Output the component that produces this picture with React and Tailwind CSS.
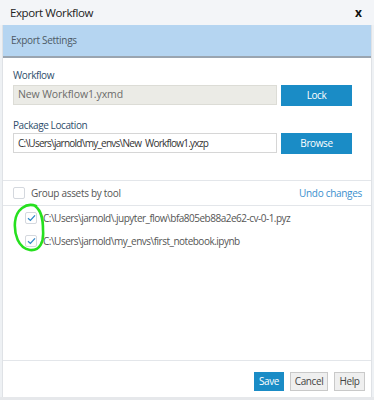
import React from 'react';

const font = { fontFamily: '"Open Sans", "Noto Sans", sans-serif' };

function Check({ checked }) {
  return (
    <span className="flex h-[12px] w-[12px] items-center justify-center rounded-[2px] border border-[#d4d8de] bg-white">
      {checked && (
        <svg width="9" height="8" viewBox="0 0 9 8">
          <path d="M1 4.2 L3.4 6.4 L8 1.4" fill="none" stroke="#2f86c9" strokeWidth="1.3" />
        </svg>
      )}
    </span>
  );
}

function Btn({ children, primary, className }) {
  return (
    <button
      className={
        (primary
          ? 'bg-[#1a8cc6] text-white border-[#1a8cc6] '
          : 'bg-[#efefef] text-[#444] border-[#c9c9c9] ') +
        'flex items-center justify-center border text-[10px] tracking-[-0.4px] ' +
        (className || '')
      }
    >
      {children}
    </button>
  );
}

export default function App() {
  const assets = [
    'C:\\Users\\jarnold\\.jupyter_flow\\bfa805eb88a2e62-cv-0-1.pyz',
    'C:\\Users\\jarnold\\my_envs\\first_notebook.ipynb',
  ];

  return (
    <div className="relative flex h-[400px] w-[374px] flex-col bg-[#eef1f4]" style={font}>
      {/* title bar */}
      <div className="flex h-[25px] items-center justify-between bg-[#f3f5f8] pl-[10px] pr-[12px]">
        <span className="text-[11.5px] text-[#222] tracking-[-0.4px]">Export Workflow</span>
        <span className="text-[12px] font-bold text-[#111]">x</span>
      </div>

      <div className="mx-[2px] flex flex-1 flex-col border-x border-[#dfe2e6] bg-white">
        {/* section header */}
        <div className="flex h-[33px] items-center border-b-2 border-[#9aa5b0] bg-[#b5d5f1] pl-[8px]">
          <span className="text-[10px] text-[#4d5a66] tracking-[-0.3px]">Export Settings</span>
        </div>

        <div className="flex flex-col pl-[10px] pt-[10px]">
          <span className="text-[10px] leading-[14px] text-[#2e4d6b] tracking-[-0.4px]">Workflow</span>
          <div className="mt-[3px] flex gap-[4px]">
            <div className="flex h-[20px] w-[264px] items-center border border-[#dcdcd6] bg-[#ebebe6] pl-[4px] text-[10.5px] text-[#6b6b6b] tracking-[-0.1px]">
              New Workflow1.yxmd
            </div>
            <Btn primary className="h-[21px] w-[71px]">Lock</Btn>
          </div>

          <span className="mt-[12px] text-[10px] leading-[14px] text-[#2e4d6b] tracking-[-0.4px]">Package Location</span>
          <div className="mt-[1px] flex gap-[4px]">
            <div className="flex h-[20px] w-[264px] items-center border border-[#d6d6d6] bg-white pl-[4px] text-[10px] text-[#333] tracking-[-0.75px] [word-spacing:2px]">
              C:\Users\jarnold\my_envs\New Workflow1.yxzp
            </div>
            <Btn primary className="h-[21px] w-[71px]">Browse</Btn>
          </div>
        </div>

        {/* group row */}
        <div className="mt-[26px] flex h-[26px] items-center justify-between border-y border-[#e3e6ea] pl-[10px] pr-[9px]">
          <div className="flex items-center gap-[6px]">
            <Check />
            <span className="text-[10px] text-[#555] tracking-[-0.3px]">Group assets by tool</span>
          </div>
          <span className="text-[10px] text-[#3a8fce] tracking-[-0.3px]">Undo changes</span>
        </div>

        {/* assets */}
        <div className="flex flex-1 flex-col gap-[11px] pl-[22px] pt-[6px]">
          {assets.map((a) => (
            <div key={a} className="flex h-[12px] items-center gap-[6px]">
              <Check checked />
              <span className="text-[10px] text-[#555] tracking-[-0.5px]">{a}</span>
            </div>
          ))}
        </div>

        {/* footer */}
        <div className="flex h-[37px] items-start justify-end gap-[6px] border-t border-[#e3e6ea] pr-[6px] pt-[11px]">
          <Btn primary className="h-[19px] w-[30px]">Save</Btn>
          <Btn className="h-[19px] w-[38px]">Cancel</Btn>
          <Btn className="h-[19px] w-[31px]">Help</Btn>
        </div>
      </div>
      <div className="h-[3px] bg-[#e6e8eb]" />

      {/* hand-drawn annotation */}
      <svg className="pointer-events-none absolute left-[10px] top-[202px]" width="40" height="52" viewBox="0 0 40 52">
        <path
          d="M26 4 C16 0 6 8 5 20 C4 32 8 46 20 48 C30 49 34 40 33 28 C33 18 32 9 25 4"
          fill="none"
          stroke="#26e01f"
          strokeWidth="2.6"
          strokeLinecap="round"
        />
      </svg>
    </div>
  );
}
